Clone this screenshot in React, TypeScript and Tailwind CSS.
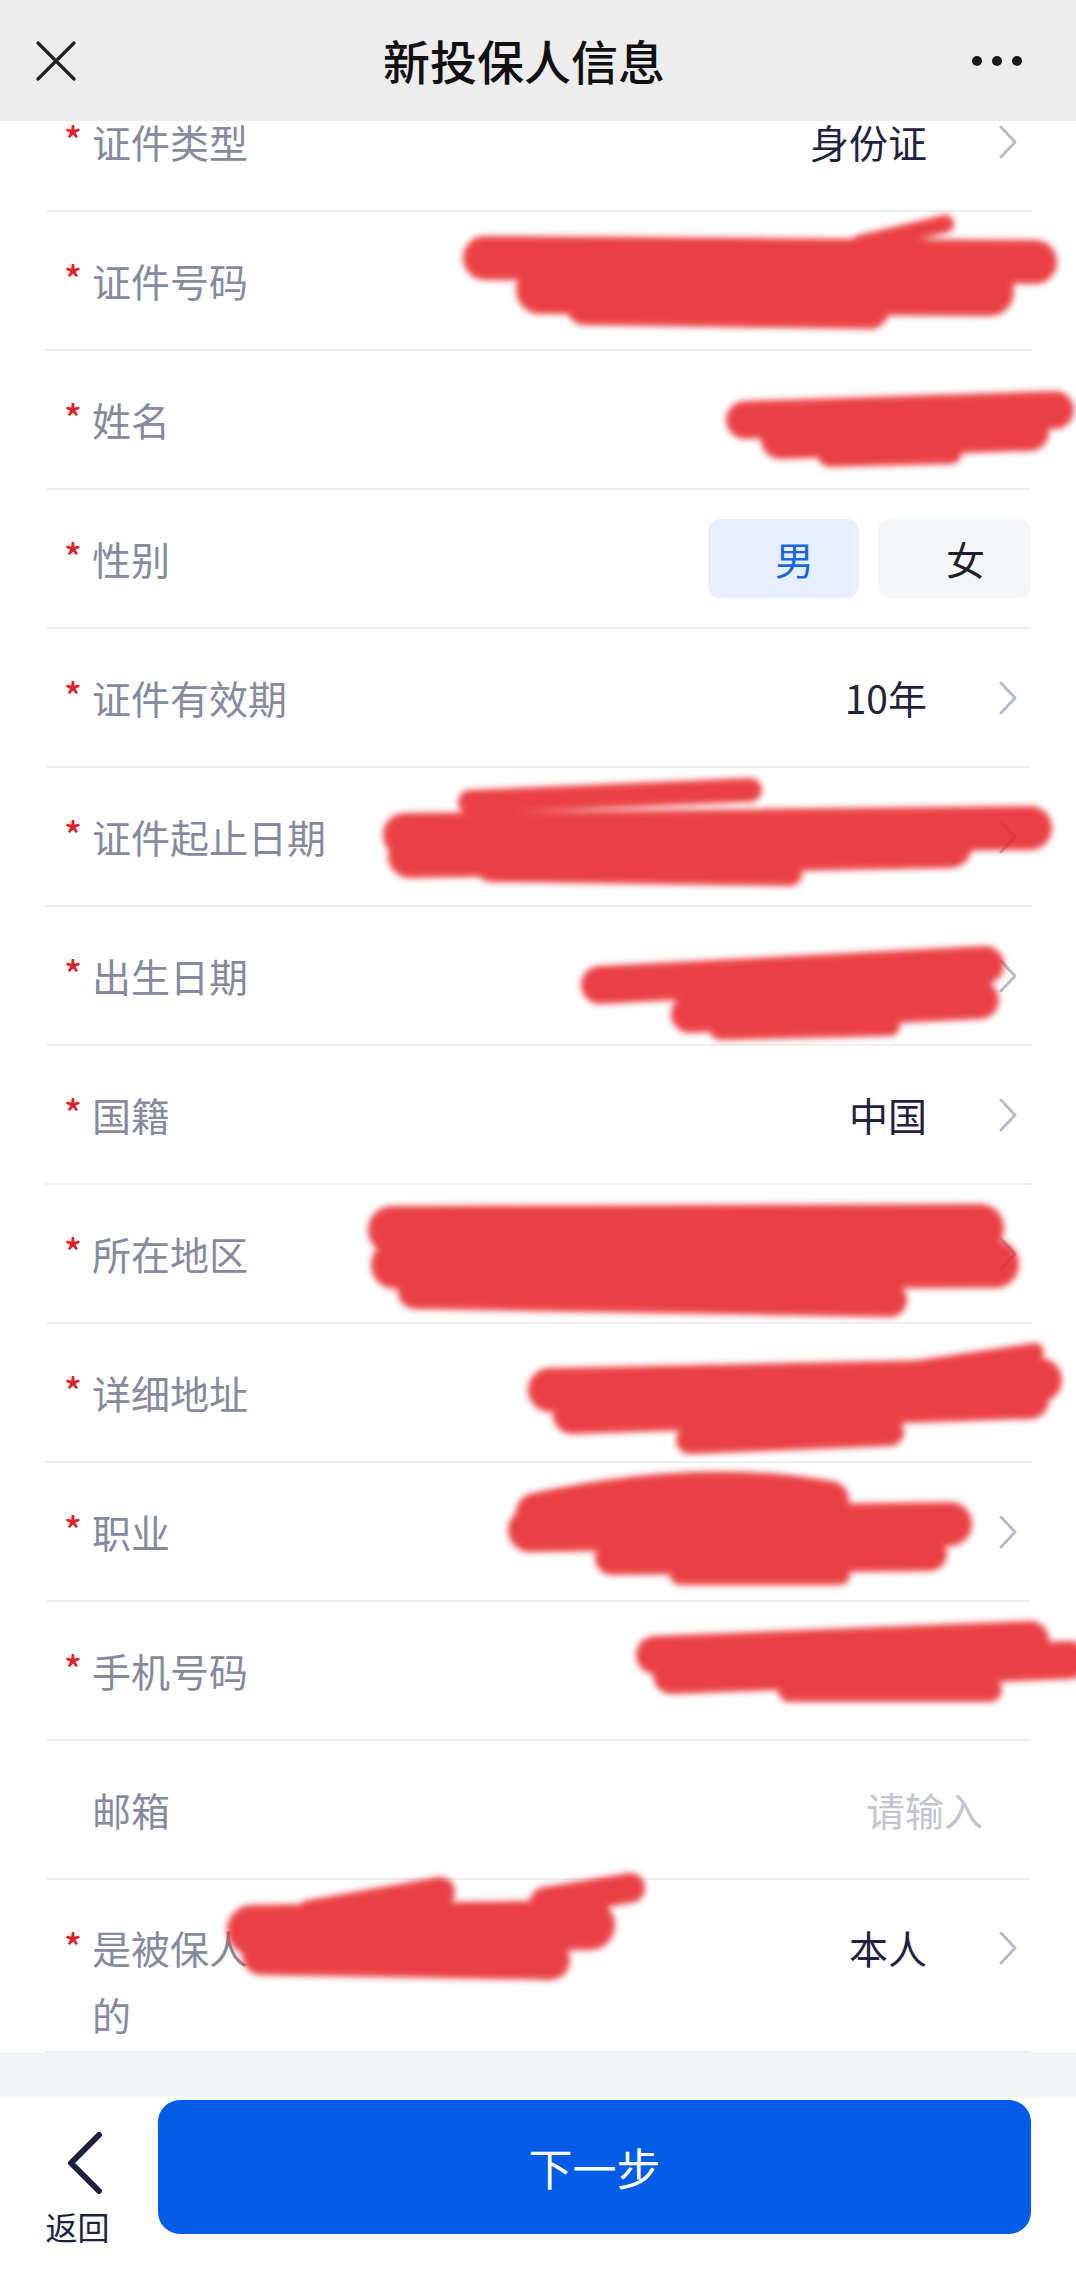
import React from 'react';

type Row = {
  label: string;
  required?: boolean;
  value?: string;
  placeholder?: string;
  arrow?: boolean;
  gender?: boolean;
};

const ROWS: Row[] = [
  { label: '证件类型', required: true, value: '身份证', arrow: true },
  { label: '证件号码', required: true },
  { label: '姓名', required: true },
  { label: '性别', required: true, gender: true },
  { label: '证件有效期', required: true, value: '10年', arrow: true },
  { label: '证件起止日期', required: true, arrow: true },
  { label: '出生日期', required: true, arrow: true },
  { label: '国籍', required: true, value: '中国', arrow: true },
  { label: '所在地区', required: true, arrow: true },
  { label: '详细地址', required: true },
  { label: '职业', required: true, arrow: true },
  { label: '手机号码', required: true },
  { label: '邮箱', placeholder: '请输入' },
];

// red marker strokes that hide the personal data in the screenshot
const SCRIBBLES: { d: string; w: number }[] = [
  { d: 'M485 258 L1035 262', w: 44 },
  { d: 'M540 290 L990 292', w: 48 },
  { d: 'M585 306 L870 310', w: 38 },
  { d: 'M860 244 L945 224', w: 18 },
  { d: 'M745 420 L1055 410', w: 38 },
  { d: 'M780 440 L1030 432', w: 38 },
  { d: 'M830 455 L950 452', w: 24 },
  { d: 'M405 835 L1030 828', w: 44 },
  { d: 'M410 856 L950 846', w: 44 },
  { d: 'M470 802 L750 790', w: 24 },
  { d: 'M490 870 L790 874', w: 24 },
  { d: 'M600 985 L985 965', w: 38 },
  { d: 'M690 1014 L980 1000', w: 38 },
  { d: 'M720 1030 L890 1026', w: 20 },
  { d: 'M392 1230 L980 1228', w: 48 },
  { d: 'M395 1265 L995 1264', w: 48 },
  { d: 'M415 1292 L890 1300', w: 34 },
  { d: 'M550 1390 L1040 1380', w: 44 },
  { d: 'M572 1415 L1030 1400', w: 38 },
  { d: 'M690 1440 L890 1432', w: 28 },
  { d: 'M900 1372 L1035 1352', w: 18 },
  { d: 'M535 1512 Q700 1476 830 1500', w: 38 },
  { d: 'M530 1530 L950 1524', w: 44 },
  { d: 'M612 1558 L930 1554', w: 34 },
  { d: 'M680 1575 L840 1575', w: 20 },
  { d: 'M655 1655 L1030 1640', w: 38 },
  { d: 'M672 1675 L1070 1660', w: 38 },
  { d: 'M790 1690 L990 1690', w: 24 },
  { d: 'M252 1930 L590 1925', w: 50 },
  { d: 'M262 1955 L550 1960', w: 40 },
  { d: 'M310 1915 L440 1892', w: 30 },
  { d: 'M545 1902 L630 1888', w: 30 },
];

function Chevron() {
  return (
    <svg width="20" height="34" viewBox="0 0 20 34" className="ml-[71px] mr-[13px] shrink-0">
      <path d="M3 2 L17 17 L3 32" fill="none" stroke="#b8bccb" strokeWidth="3" strokeLinecap="round" strokeLinejoin="round" />
    </svg>
  );
}

function Asterisk({ show }: { show?: boolean }) {
  return (
    <span className="w-[47px] shrink-0 pl-[19px] text-[37px] font-medium leading-[67px] text-[#e0202a] self-start pt-[33px]">
      {show ? '*' : ''}
    </span>
  );
}

function FormRow({ row }: { row: Row }) {
  return (
    <div className="flex items-center h-[139px] border-b-2 border-[#eeeff2]">
      <Asterisk show={row.required} />
      <span className="text-[39px] leading-[67px] text-[#858a9e]">{row.label}</span>
      <div className="ml-auto flex items-center">
        {row.gender ? (
          <div className="flex gap-[19px]">
            <div className="w-[151px] h-[79px] rounded-[12px] bg-[#e5effd] text-[#1a66e0] text-[39px] flex items-center justify-center pl-[22px]">男</div>
            <div className="w-[153px] h-[79px] rounded-[12px] bg-[#f5f6f8] text-[#1d1f2a] text-[39px] flex items-center justify-center pl-[22px]">女</div>
          </div>
        ) : row.placeholder ? (
          <span className="text-[39px] text-[#c2c5d0] mr-[48px]">{row.placeholder}</span>
        ) : (
          <>
            {row.value && <span className="text-[39px] text-[#1f2340]">{row.value}</span>}
            {row.arrow && <Chevron />}
          </>
        )}
      </div>
    </div>
  );
}

export default function App() {
  return (
    <div className="relative w-[1076px] h-[2280px] bg-white overflow-hidden flex flex-col font-['Noto_Sans_CJK_SC','Noto_Sans',sans-serif]">
      {/* Nav bar */}
      <div className="relative z-10 h-[121px] shrink-0 bg-[#ededed] flex items-center justify-between px-[36px]">
        <svg width="40" height="40" viewBox="0 0 40 40">
          <path d="M2 2 L38 38 M38 2 L2 38" stroke="#222" strokeWidth="3.2" strokeLinecap="round" />
        </svg>
        <h1 className="text-[47px] font-medium text-[#111]">新投保人信息</h1>
        <div className="flex gap-[10px] mr-[18px]">
          <span className="w-[10px] h-[10px] rounded-full bg-[#1a1a1a]" />
          <span className="w-[10px] h-[10px] rounded-full bg-[#1a1a1a]" />
          <span className="w-[10px] h-[10px] rounded-full bg-[#1a1a1a]" />
        </div>
      </div>

      {/* Scrolled form */}
      <div className="flex-1 bg-[#f2f3f5] overflow-hidden">
        <div className="bg-white -mt-[48px] px-[45px]">
          {ROWS.map((row, i) => (
            <FormRow key={i} row={row} />
          ))}
          <div className="flex items-start pt-[34px] pb-[3px] border-b-2 border-[#eeeff2]">
            <span className="w-[47px] shrink-0 pl-[19px] text-[37px] font-medium leading-[67px] text-[#e0202a] -mt-[1px]">*</span>
            <span className="w-[170px] text-[39px] leading-[67px] text-[#858a9e]">是被保人的</span>
            <div className="ml-auto flex items-center h-[67px]">
              <span className="text-[39px] text-[#1f2340]">本人</span>
              <Chevron />
            </div>
          </div>
        </div>
      </div>

      {/* Bottom bar */}
      <div className="h-[183px] shrink-0 bg-white flex items-start px-[45px] pt-[3px]">
        <div className="w-[65px] flex flex-col items-center pt-[32px]">
          <svg width="40" height="62" viewBox="0 0 40 62" className="ml-[14px]">
            <path d="M34 3 L6 31 L34 59" fill="none" stroke="#1c2140" strokeWidth="6" strokeLinecap="round" strokeLinejoin="round" />
          </svg>
          <span className="mt-[12px] text-[32px] leading-[40px] text-[#1c2140]">返回</span>
        </div>
        <button className="ml-[48px] flex-1 h-[134px] rounded-[22px] bg-[#005ce6] text-white text-[44px]">
          下一步
        </button>
      </div>

      {/* redaction marks */}
      <svg className="absolute inset-0 pointer-events-none z-20" width="1076" height="2280">
        <defs>
          <filter id="soft">
            <feGaussianBlur stdDeviation="3" />
          </filter>
        </defs>
        <g filter="url(#soft)" fill="none" stroke="#e8262b" strokeLinecap="round" opacity="0.88">
          {SCRIBBLES.map((s, i) => (
            <path key={i} d={s.d} strokeWidth={s.w} />
          ))}
        </g>
      </svg>
    </div>
  );
}
